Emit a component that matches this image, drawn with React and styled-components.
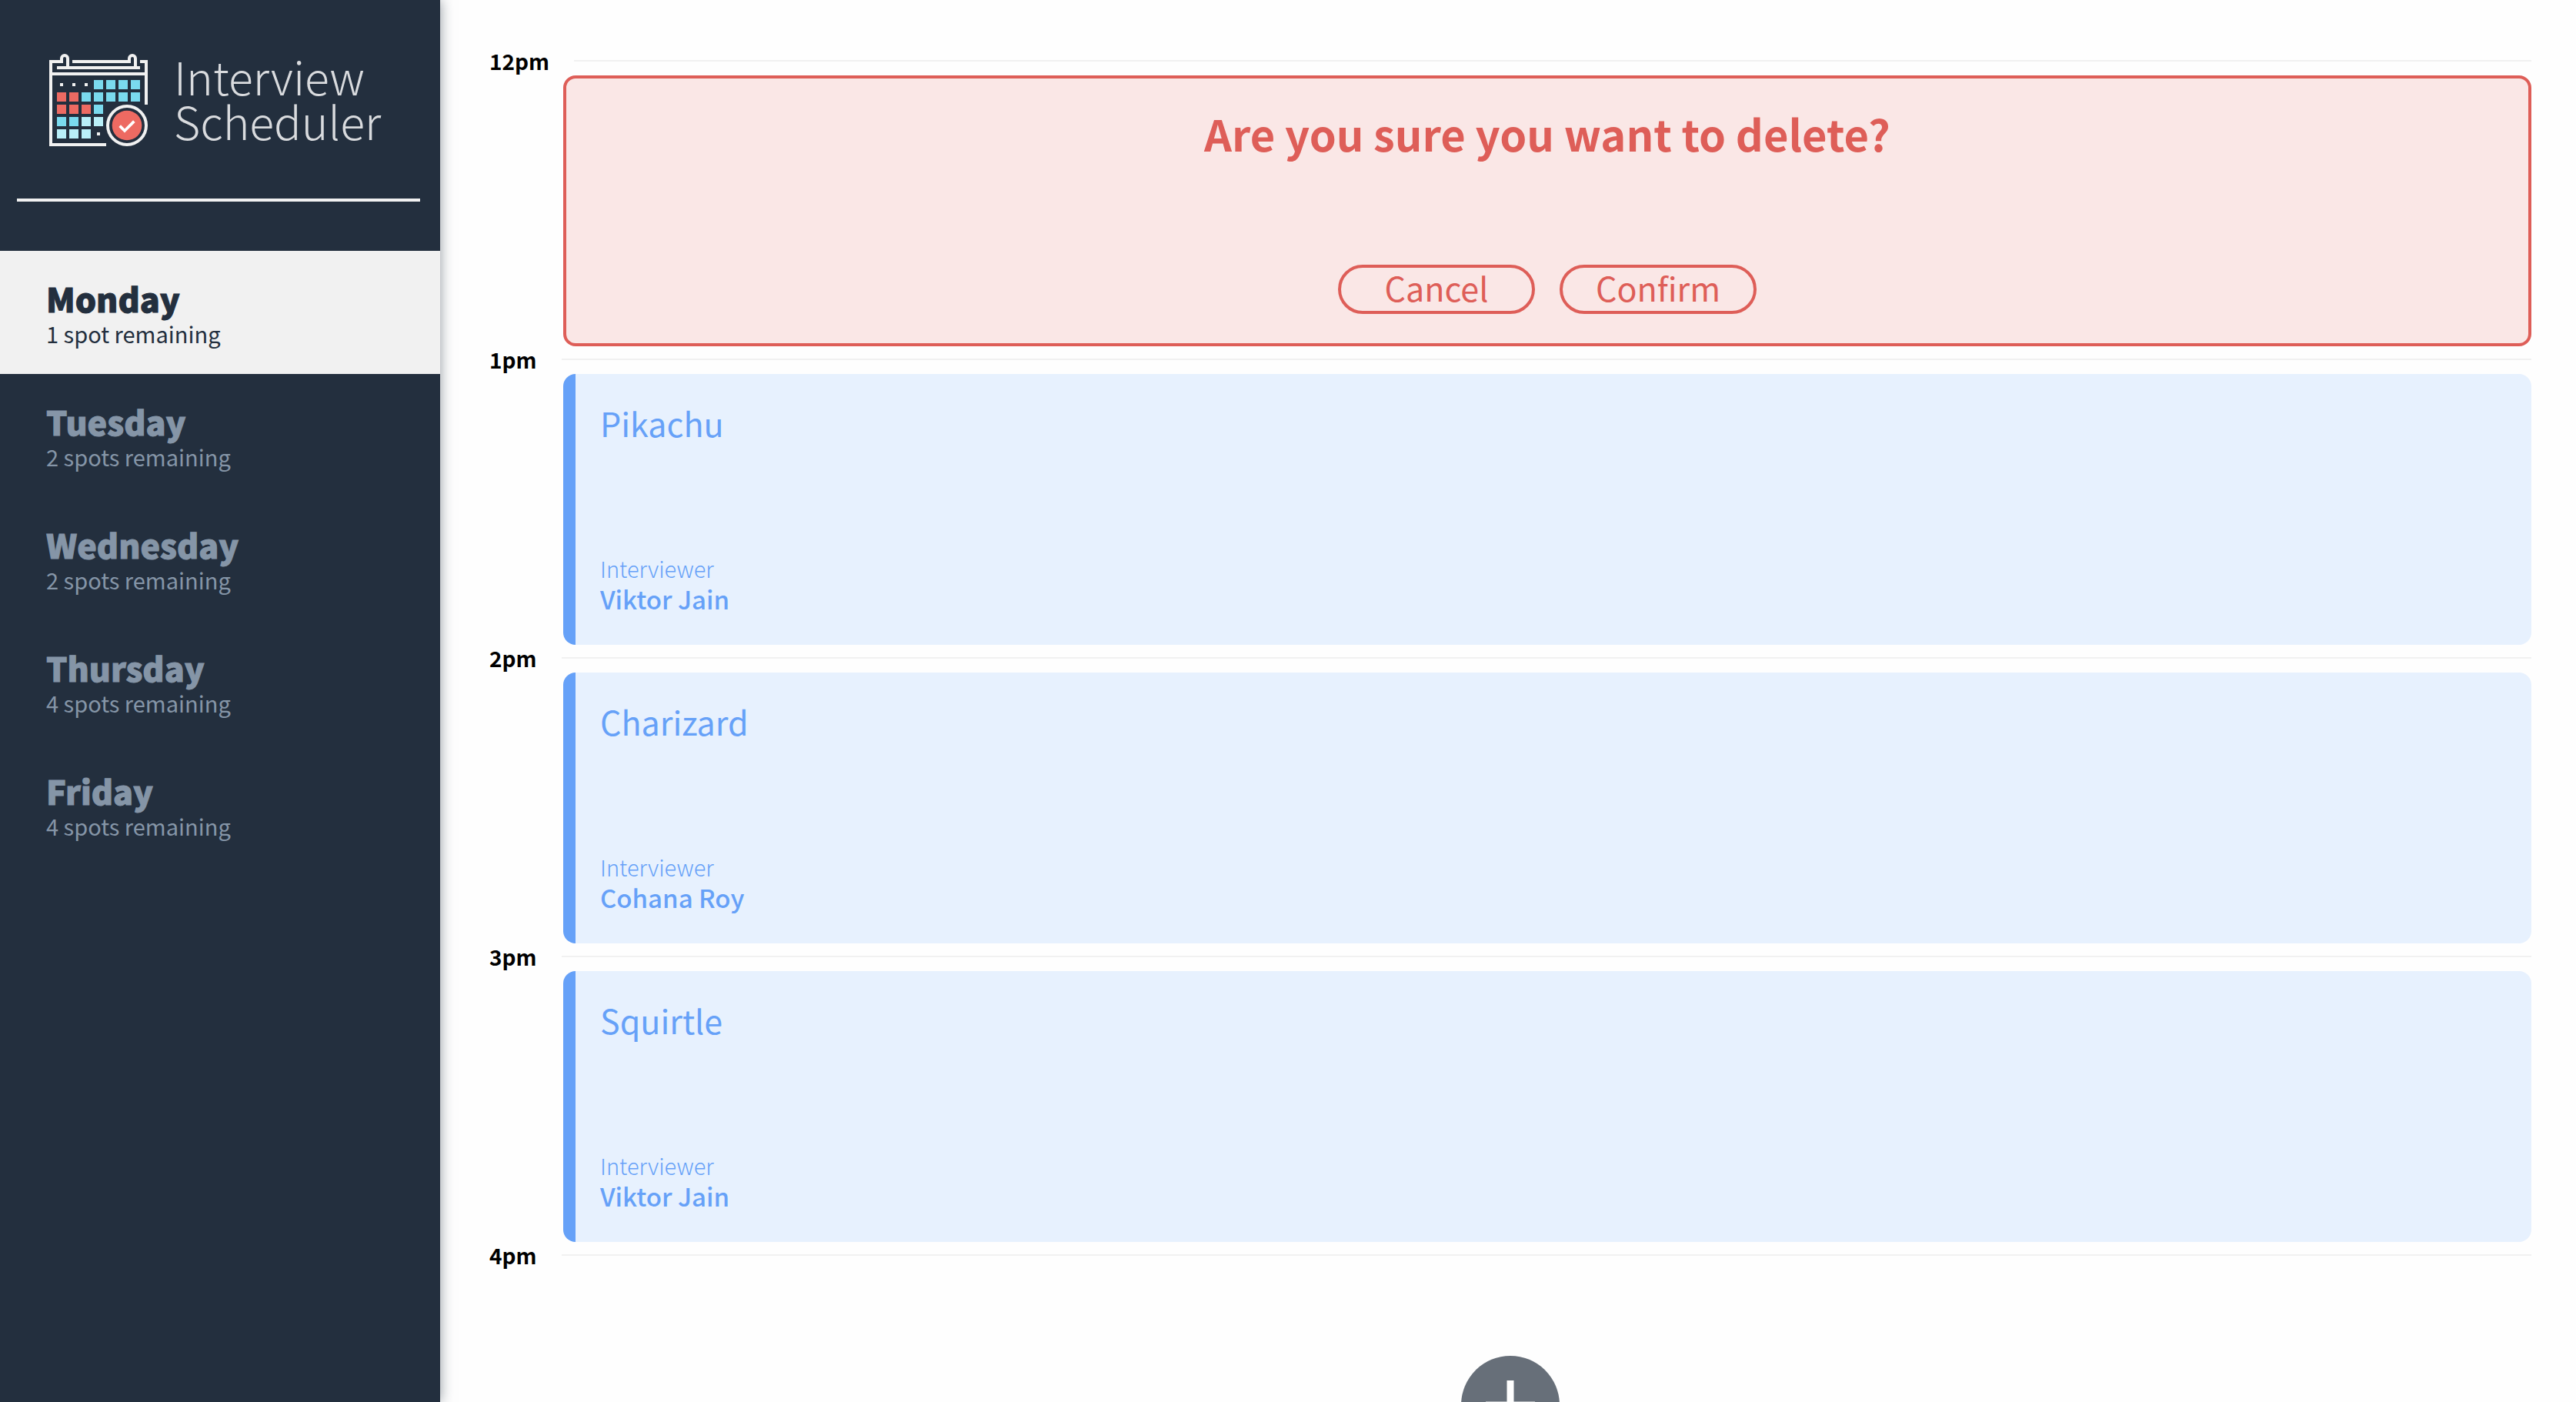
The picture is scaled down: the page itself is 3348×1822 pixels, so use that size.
import React, { useState } from "react";
import styled, { createGlobalStyle } from "styled-components";

const GlobalStyle = createGlobalStyle`
  *, *::before, *::after { box-sizing: border-box; }
  body {
    margin: 0;
    background: #fefefe;
    color: #000;
    font-family: "Noto Sans CJK SC", "Noto Sans", sans-serif;
    -webkit-font-smoothing: antialiased;
  }
  h1, h2, h3, h4, p, ul { margin: 0; padding: 0; }
  button { font-family: inherit; cursor: pointer; }
`;

const Layout = styled.main`
  display: flex;
  height: 100vh;
`;

const Sidebar = styled.section`
  flex: none;
  width: 572px;
  background: #232f3e;
  box-shadow: 0 0 16px rgba(34, 47, 62, 0.5);
  z-index: 1;
`;

const Brand = styled.header`
  display: flex;
  gap: 34px;
  height: 258px;
  padding: 70px 0 0 64px;
`;

const BrandName = styled.h1`
  color: #d9dbde;
  font-size: 59px;
  font-weight: 300;
  line-height: 58px;
`;

const Separator = styled.hr`
  height: 4px;
  margin: 0 26px 64px 22px;
  border: 0;
  background: #f1f1f1;
`;

const DayList = styled.ul`
  list-style: none;
`;

const DayButton = styled.button`
  display: block;
  width: 100%;
  height: 160px;
  padding: 36px 60px 32px;
  border: 0;
  text-align: left;
  color: ${(p) => (p.$selected ? "#232f3e" : "#8595a7")};
  background: ${(p) => (p.$selected ? "#f1f1f1" : "transparent")};
`;

const DayName = styled.span`
  display: block;
  font-size: 43px;
  font-weight: 900;
  line-height: 50px;
  -webkit-text-stroke: 1px currentColor;
`;

const DaySpots = styled.span`
  display: block;
  font-size: 29px;
  font-weight: 400;
  line-height: 42px;
`;

const Schedule = styled.section`
  flex: 1;
  min-width: 0;
  padding: 62px 58px 0 64px;
  overflow-y: auto;
  scrollbar-width: none;
`;

const Slot = styled.article`
  display: flex;
  flex-direction: column;
  gap: 2px;
`;

const SlotHeader = styled.header`
  display: flex;
  align-items: center;
  gap: 32px;
  height: 34px;
`;

const Time = styled.h4`
  font-size: 28px;
  font-weight: 600;
  line-height: 34px;
`;

const Rule = styled.hr`
  flex: 1;
  height: 2px;
  margin: 0;
  border: 0;
  background: #f1f1f1;
`;

const Card = styled.div`
  display: flex;
  flex-direction: column;
  justify-content: space-between;
  height: 352px;
  margin-left: 96px;
  border-radius: 16px;
`;

const Booking = styled(Card)`
  padding: 36px 32px 40px;
  border-left: 16px solid #66a1f8;
  background: #e7f1fe;
  color: #66a1f8;
`;

const Student = styled.h2`
  font-size: 43px;
  font-weight: 400;
  line-height: 54px;
`;

const InterviewerLabel = styled.h4`
  font-size: 29px;
  font-weight: 300;
  line-height: 40px;
`;

const InterviewerName = styled.h3`
  font-size: 33px;
  font-weight: 500;
  line-height: 40px;
`;

const Confirmation = styled(Card)`
  align-items: center;
  padding: 32px 32px 38px;
  border: 4px solid #de5e58;
  background: #fae7e6;
  color: #de5e58;
`;

const Question = styled.h1`
  font-size: 56px;
  font-weight: 600;
  line-height: 78px;
`;

const Actions = styled.div`
  display: flex;
  gap: 32px;
`;

const Action = styled.button`
  width: 256px;
  height: 64px;
  padding: 0 0 6px;
  border: 4px solid #de5e58;
  border-radius: 32px;
  background: transparent;
  color: #de5e58;
  font-size: 43px;
  line-height: 50px;
`;

const Empty = styled.div`
  display: flex;
  align-items: center;
  justify-content: center;
  height: 352px;
`;

const AddButton = styled.button`
  width: 128px;
  height: 128px;
  padding: 0;
  border: 0;
  background: none;
`;

const days = [
  { name: "Monday", spots: 1 },
  { name: "Tuesday", spots: 2 },
  { name: "Wednesday", spots: 2 },
  { name: "Thursday", spots: 4 },
  { name: "Friday", spots: 4 },
];

const slots = [
  { time: "12pm", mode: "confirm" },
  { time: "1pm", student: "Pikachu", interviewer: "Viktor Jain" },
  { time: "2pm", student: "Charizard", interviewer: "Cohana Roy" },
  { time: "3pm", student: "Squirtle", interviewer: "Viktor Jain" },
  { time: "4pm", mode: "empty" },
];

const RED = "#ed6a62";
const CYAN = "#7adaee";
const PALE = "#b9eff8";

const cells = [
  [null, null, null, CYAN, CYAN, CYAN, CYAN],
  [RED, RED, CYAN, CYAN, CYAN, CYAN, CYAN],
  [RED, RED, RED, CYAN],
  [CYAN, CYAN, PALE, PALE],
  [PALE, PALE, PALE, null],
];

function CalendarLogo() {
  return (
    <svg width="128" height="120" viewBox="42 30 384 360" fill="none" aria-hidden="true">
      <g stroke="#f1f1f1" strokeWidth="12">
        <path d="M114 84V48a12 12 0 0 0-24 0v12H48v324h216" />
        <path d="M378 84V48a12 12 0 0 0-24 0v12H132M396 60h24v168" />
        <path d="M72 84h324M48 108h372" />
        <circle cx="345" cy="309" r="75" />
      </g>
      {cells.map((row, r) =>
        row.map((color, c) =>
          color ? (
            <rect key={`${r}-${c}`} x={72 + c * 48} y={132 + r * 48} width="36" height="36" fill={color} />
          ) : (
            <rect key={`${r}-${c}`} x={84 + c * 48} y={144 + r * 48} width="12" height="12" fill="#f1f1f1" />
          )
        )
      )}
      <circle cx="345" cy="309" r="58" fill={RED} />
      <path d="M317 311l19 19 37-37" stroke="#fff" strokeWidth="11" />
    </svg>
  );
}

function AddIcon() {
  return (
    <svg width="128" height="128" viewBox="0 0 128 128" aria-hidden="true">
      <circle cx="64" cy="64" r="64" fill="#676f79" />
      <path d="M64 32v64M32 64h64" stroke="#fefefe" strokeWidth="9" />
    </svg>
  );
}

function SlotBody({ slot }) {
  if (slot.mode === "confirm") {
    return (
      <Confirmation>
        <Question>Are you sure you want to delete?</Question>
        <Actions>
          <Action type="button">Cancel</Action>
          <Action type="button">Confirm</Action>
        </Actions>
      </Confirmation>
    );
  }
  if (slot.mode === "empty") {
    return (
      <Empty>
        <AddButton type="button" aria-label="Add">
          <AddIcon />
        </AddButton>
      </Empty>
    );
  }
  return (
    <Booking>
      <Student>{slot.student}</Student>
      <div>
        <InterviewerLabel>Interviewer</InterviewerLabel>
        <InterviewerName>{slot.interviewer}</InterviewerName>
      </div>
    </Booking>
  );
}

export default function App() {
  const [day, setDay] = useState("Monday");
  return (
    <>
      <GlobalStyle />
      <Layout>
        <Sidebar>
          <Brand>
            <CalendarLogo />
            <BrandName>
              Interview
              <br />
              Scheduler
            </BrandName>
          </Brand>
          <Separator />
          <nav>
            <DayList>
              {days.map((d) => (
                <li key={d.name}>
                  <DayButton type="button" $selected={d.name === day} onClick={() => setDay(d.name)}>
                    <DayName>{d.name}</DayName>
                    <DaySpots>
                      {d.spots} {d.spots === 1 ? "spot" : "spots"} remaining
                    </DaySpots>
                  </DayButton>
                </li>
              ))}
            </DayList>
          </nav>
        </Sidebar>
        <Schedule>
          {slots.map((slot) => (
            <Slot key={slot.time}>
              <SlotHeader>
                <Time>{slot.time}</Time>
                <Rule />
              </SlotHeader>
              <SlotBody slot={slot} />
            </Slot>
          ))}
        </Schedule>
      </Layout>
    </>
  );
}
